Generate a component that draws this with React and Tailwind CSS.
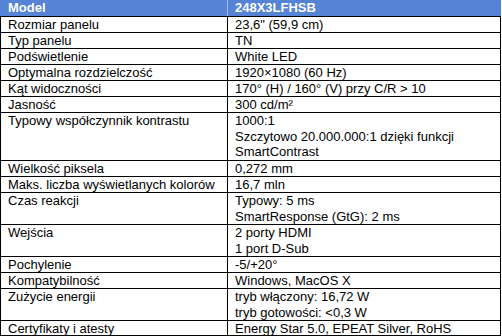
import React from 'react';

const rows = [
    { label: 'Rozmiar panelu', value: ['23,6" (59,9 cm)'], h: 'h-[16px]' },
    { label: 'Typ panelu', value: ['TN'], h: 'h-[16px]' },
    { label: 'Podświetlenie', value: ['White LED'], h: 'h-[16px]' },
    { label: 'Optymalna rozdzielczość', value: ['1920×1080 (60 Hz)'], h: 'h-[16px]' },
    { label: 'Kąt widoczności', value: ['170° (H) / 160° (V) przy C/R > 10'], h: 'h-[16px]' },
    { label: 'Jasność', value: ['300 cd/m²'], h: 'h-[16px]' },
    {
        label: 'Typowy współczynnik kontrastu',
        value: ['1000:1', 'Szczytowo 20.000.000:1 dzięki funkcji', 'SmartContrast'],
        h: 'h-[48px]'
    },
    { label: 'Wielkość piksela', value: ['0,272 mm'], h: 'h-[16px]' },
    { label: 'Maks. liczba wyświetlanych kolorów', value: ['16,7 mln'], h: 'h-[16px]' },
    { label: 'Czas reakcji', value: ['Typowy: 5 ms', 'SmartResponse (GtG): 2 ms'], h: 'h-[32px]' },
    { label: 'Wejścia', value: ['2 porty HDMI', '1 port D-Sub'], h: 'h-[32px]' },
    { label: 'Pochylenie', value: ['-5/+20°'], h: 'h-[16px]' },
    { label: 'Kompatybilność', value: ['Windows, MacOS X'], h: 'h-[16px]' },
    { label: 'Zużycie energii', value: ['tryb włączony: 16,72 W', 'tryb gotowości: <0,3 W'], h: 'h-[32px]' },
    { label: 'Certyfikaty i atesty', value: ['Energy Star 5.0, EPEAT Silver, RoHS'], h: 'h-[15px]' }
];

const App = () => {
    return (
        <div className="bg-white w-[502px] h-[336px] overflow-hidden text-[13px] text-black font-['Liberation_Sans',Arial,sans-serif]">
            <div className="w-[501px]">
                <div className="flex h-[17px] border-b border-black bg-[#5583d6] text-white font-bold leading-[16px]">
                    <div className="w-[228px] shrink-0 pl-[8px] border-r border-[#9fbaea]">Model</div>
                    <div className="flex-1 pl-[7px]">248X3LFHSB</div>
                </div>
                <div className="border-l border-r border-black">
                    {rows.map((row) => (
                        <div key={row.label} className={`flex border-b border-black ${row.h}`}>
                            <div className={`w-[227px] shrink-0 pl-[7px] border-r border-black ${row.value.length > 1 ? 'leading-[15.6px]' : 'leading-[15px]'}`}>
                                {row.label}
                            </div>
                            <div className={`flex-1 pl-[7px] whitespace-nowrap ${row.value.length > 1 ? 'leading-[15.6px]' : 'leading-[15px]'}`}>
                                {row.value.map((line) => (
                                    <div key={line}>{line}</div>
                                ))}
                            </div>
                        </div>
                    ))}
                </div>
            </div>
        </div>
    );
};

export default App;
